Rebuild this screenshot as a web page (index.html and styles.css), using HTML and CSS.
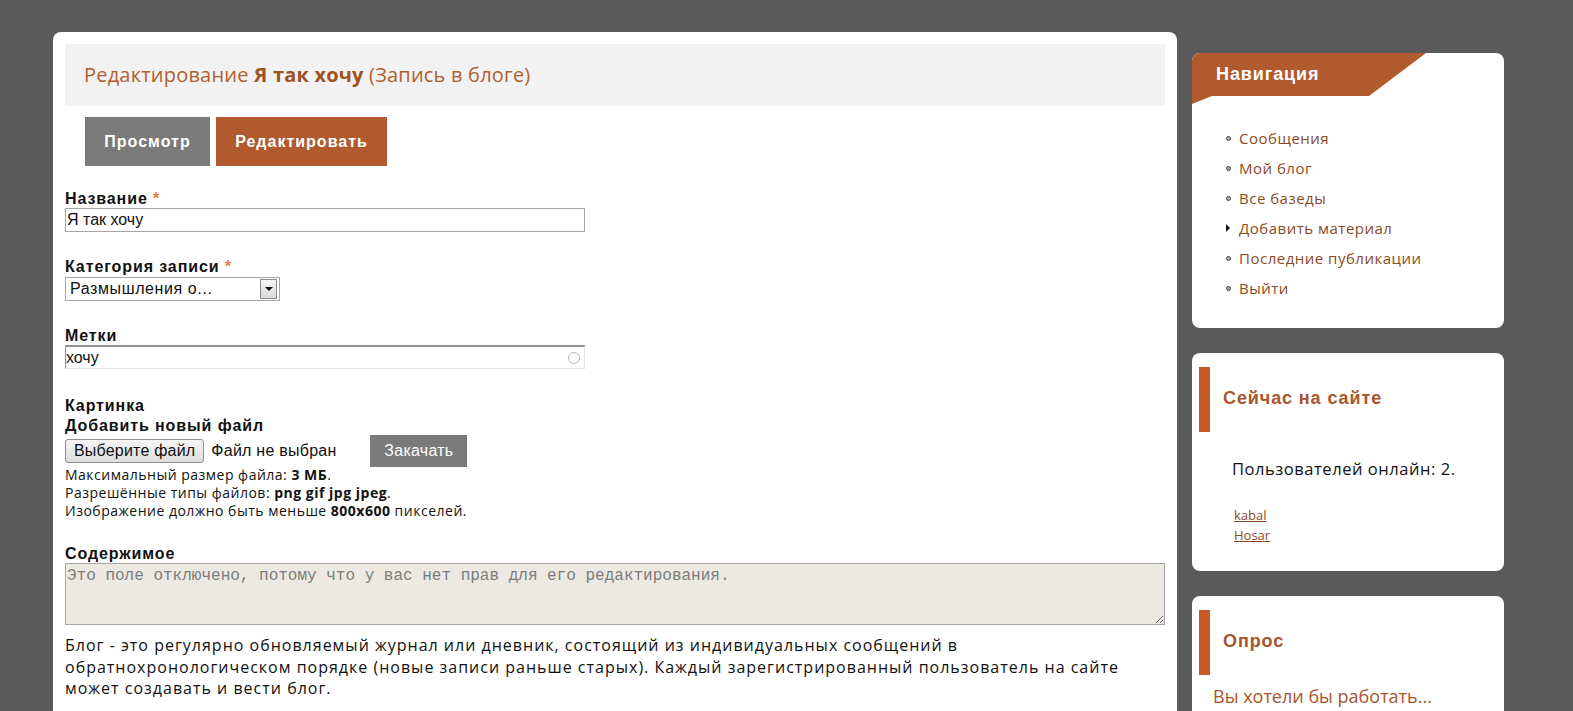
FILE: index.html
```html
<!DOCTYPE html>
<html lang="ru">
<head>
    <meta charset="UTF-8">
    <title>Редактирование Я так хочу</title>
    <link rel="stylesheet" href="styles.css">
</head>
<body>
    <div class="page">
        <div class="main">
            <div class="page-title">
                Редактирование <b>Я так хочу</b> (Запись в блоге)
            </div>

            <div class="tabs">
                <a class="tab">Просмотр</a>
                <a class="tab active">Редактировать</a>
            </div>

            <div class="field">
                <label>Название <span class="req">*</span></label>
                <input class="text-input" type="text" value="Я так хочу">
            </div>

            <div class="field">
                <label>Категория записи <span class="req">*</span></label>
                <div class="select">
                    <span>Размышления о...</span>
                    <span class="select-arrow"><i></i></span>
                </div>
            </div>

            <div class="field">
                <label>Метки</label>
                <div class="text-input tags">
                    <span>хочу</span>
                    <span class="throbber"></span>
                </div>
            </div>

            <div class="field image-field">
                <label>Картинка</label>
                <label class="sub-label">Добавить новый файл</label>
                <div class="file-row">
                    <span class="file-btn">Выберите файл</span>
                    <span class="file-name">Файл не выбран</span>
                    <span class="upload-btn">Закачать</span>
                </div>
                <div class="hint">
                    Максимальный размер файла: <b>3 МБ</b>.<br>
                    Разрешённые типы файлов: <b>png gif jpg jpeg</b>.<br>
                    Изображение должно быть меньше <b>800x600</b> пикселей.
                </div>
            </div>

            <div class="field body-field">
                <label>Содержимое</label>
                <textarea class="disabled-area" disabled>Это поле отключено, потому что у вас нет прав для его редактирования.</textarea>
            </div>

            <p class="descr">Блог - это регулярно обновляемый журнал или дневник, состоящий из индивидуальных сообщений в обратнохронологическом порядке (новые записи раньше старых). Каждый зарегистрированный пользователь на сайте может создавать и вести блог.</p>
        </div>

        <div class="sidebar">
            <div class="block nav-block">
                <div class="nav-title">Навигация</div>
                <ul class="menu">
                    <li><a>Сообщения</a></li>
                    <li><a>Мой блог</a></li>
                    <li><a>Все базеды</a></li>
                    <li class="collapsed"><a>Добавить материал</a></li>
                    <li><a>Последние публикации</a></li>
                    <li><a>Выйти</a></li>
                </ul>
            </div>

            <div class="block">
                <h2 class="block-title">Сейчас на сайте</h2>
                <div class="online">Пользователей онлайн: 2.</div>
                <div class="users">
                    <a>kabal</a><br>
                    <a>Hosar</a>
                </div>
            </div>

            <div class="block">
                <h2 class="block-title">Опрос</h2>
                <div class="poll">Вы хотели бы работать...</div>
            </div>
        </div>
    </div>
</body>
</html>
```

FILE: styles.css
```css
body {
    margin: 0;
    background-color: #5a5a5a;
    font-family: 'Liberation Sans', Arial, sans-serif;
    color: #111;
    overflow: hidden;
}

.page {
    display: flex;
    align-items: flex-start;
    gap: 15px;
    padding: 32px 0 0 53px;
}

/* основная колонка */
.main {
    width: 1100px;
    min-height: 700px;
    background-color: #fff;
    border-radius: 8px 8px 0 0;
    padding: 12px;
}

.page-title {
    background-color: #f2f2f2;
    height: 62px;
    line-height: 62px;
    padding-left: 19px;
    font-family: 'Open Sans', sans-serif;
    font-size: 20px;
    letter-spacing: 0.2px;
    color: #b0602e;
}

.page-title b {
    color: #a0521f;
}

.tabs {
    display: flex;
    gap: 6px;
    margin: 11px 0 0 20px;
}

.tab {
    display: block;
    height: 49px;
    line-height: 49px;
    text-align: center;
    width: 125px;
    background-color: #7a7a7a;
    color: #fff;
    font-weight: bold;
    font-size: 16px;
    letter-spacing: 1px;
}

.tab.active {
    width: 171px;
    background-color: #b05a2e;
}

.field {
    margin-top: 24px;
}

.field + .field {
    margin-top: 26px;
}

.field.image-field {
    margin-top: 28px;
}

.field label {
    display: block;
    font-weight: bold;
    font-size: 16px;
    letter-spacing: 0.9px;
    line-height: 18px;
}

.field .sub-label {
    margin-top: 2px;
}

.req {
    color: #f07a3c;
}

.text-input {
    box-sizing: border-box;
    width: 520px;
    height: 24px;
    margin: 0;
    border: 1px solid #a5a5a5;
    padding: 0 1px;
    font-family: 'Liberation Sans', Arial, sans-serif;
    font-size: 16px;
    color: #111;
}

.select {
    box-sizing: border-box;
    width: 215px;
    height: 24px;
    margin-top: 1px;
    border: 1px solid #a5a5a5;
    display: flex;
    align-items: center;
    justify-content: space-between;
    padding-left: 4px;
    font-size: 16px;
    letter-spacing: 0.6px;
}

.select-arrow {
    width: 15px;
    height: 18px;
    margin-right: 2px;
    border: 1px solid #8a8a8a;
    background: linear-gradient(#f4f4f4, #d9d9d9);
    display: flex;
    align-items: center;
    justify-content: center;
}

.select-arrow i {
    border-left: 4px solid transparent;
    border-right: 4px solid transparent;
    border-top: 4px solid #111;
}

.tags {
    display: flex;
    align-items: center;
    justify-content: space-between;
    padding: 0;
    border-top: 2px solid #8f8f8f;
    border-left-color: #8f8f8f;
    border-bottom-color: #e4e4e4;
    border-right-color: #e4e4e4;
}

.throbber {
    width: 10px;
    height: 10px;
    margin-right: 4px;
    border: 1px solid #b8b8b8;
    border-radius: 50%;
}

.file-row {
    display: flex;
    align-items: center;
    font-size: 16px;
}

.file-btn {
    box-sizing: border-box;
    height: 24px;
    line-height: 22px;
    border: 1px solid #8e8e8e;
    border-radius: 3px;
    background: linear-gradient(#f6f6f6, #dcdcdc);
    padding: 0 8px;
    letter-spacing: 0.2px;
}

.file-name {
    margin-left: 7px;
    width: 159px;
    letter-spacing: 0.25px;
}

.upload-btn {
    background-color: #7a7a7a;
    color: #fff;
    padding: 0 14px;
    height: 32px;
    line-height: 32px;
    letter-spacing: 0.25px;
}

.hint {
    font-family: 'Open Sans', sans-serif;
    font-size: 14px;
    letter-spacing: 0.5px;
    line-height: 18px;
    margin-top: -1px;
}

.field.body-field {
    margin-top: 25px;
}

.disabled-area {
    display: block;
    box-sizing: border-box;
    width: 1100px;
    height: 62px;
    margin: 0;
    border: 1px solid #a5a5a5;
    background-color: #ebe9e2;
    padding: 3px 1px;
    font-family: 'Liberation Mono', monospace;
    font-size: 16px;
    color: #7c7c7c;
    resize: vertical;
}

.descr {
    max-width: 1080px;
    margin: 10px 0 0;
    font-family: 'Open Sans', sans-serif;
    font-size: 16px;
    letter-spacing: 1px;
    line-height: 21.5px;
    color: #111;
}

/* боковая колонка */
.sidebar {
    width: 312px;
    display: flex;
    flex-direction: column;
    gap: 25px;
    margin-top: 21px;
}

.block {
    background-color: #fff;
    border-radius: 8px;
    padding: 14px 0 26px;
}

.nav-block {
    padding: 0 0 21px;
}

.nav-title {
    height: 51px;
    width: 234px;
    background-color: #b05a2e;
    clip-path: polygon(0 0, 234px 0, 177px 43px, 20px 43px, 0 51px);
    border-top-left-radius: 8px;
    color: #fff;
    font-weight: bold;
    font-size: 18px;
    letter-spacing: 0.9px;
    line-height: 43px;
    padding-left: 24px;
    box-sizing: border-box;
}

.menu {
    list-style: none;
    margin: 23px 0 0;
    padding: 0 0 0 47px;
}

.menu li {
    position: relative;
    height: 30px;
    line-height: 22px;
    font-family: 'Open Sans', sans-serif;
    font-size: 15px;
    letter-spacing: 0.5px;
}

.menu li a {
    color: #8a4a1c;
}

.menu li::before {
    content: "";
    position: absolute;
    left: -13px;
    top: 9px;
    width: 3px;
    height: 3px;
    border: 1px solid #444;
    border-radius: 50%;
    background-color: #aaa;
}

.menu li.collapsed::before {
    width: 0;
    height: 0;
    border-radius: 0;
    background: none;
    border: none;
    border-left: 4px solid #111;
    border-top: 4px solid transparent;
    border-bottom: 4px solid transparent;
    top: 7px;
}

.block-title {
    margin: 0;
    border-left: 11px solid #c65a24;
    margin-left: 7px;
    height: 65px;
    line-height: 63px;
    padding-left: 13px;
    font-size: 18px;
    letter-spacing: 0.9px;
    color: #a8552b;
}

.online {
    margin: 25px 0 0 40px;
    font-family: 'Open Sans', sans-serif;
    font-size: 16.5px;
    letter-spacing: 0.55px;
}

.users {
    margin: 25px 0 0 42px;
    font-family: 'Open Sans', sans-serif;
    font-size: 13px;
    line-height: 20px;
}

.users a {
    color: #8a4a1c;
    text-decoration: underline;
}

.poll {
    margin: 9px 0 0 21px;
    font-family: 'Open Sans', sans-serif;
    font-size: 18px;
    color: #a8552b;
}
```
